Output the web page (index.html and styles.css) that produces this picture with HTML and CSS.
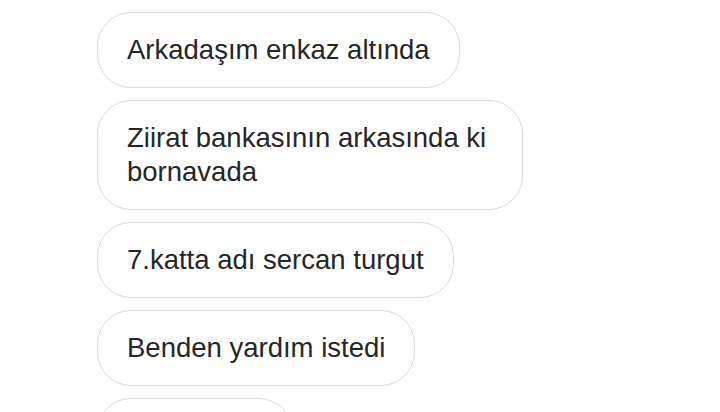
FILE: index.html
```html
<!DOCTYPE html>
<html lang="tr">
<head>
<meta charset="utf-8">
<title>Mesajlar</title>
<link rel="stylesheet" href="styles.css">
</head>
<body>
<main class="thread">
  <div class="bubble bubble-prev" aria-hidden="true"></div>
  <div class="bubble">Arkadaşım enkaz altında</div>
  <div class="bubble">Ziirat bankasının arkasında ki bornavada</div>
  <div class="bubble">7.katta adı sercan turgut</div>
  <div class="bubble">Benden yardım istedi</div>
  <div class="bubble bubble-next" aria-hidden="true"></div>
</main>
</body>
</html>
```
FILE: styles.css
```css
html, body {
  margin: 0;
  padding: 0;
  background: #ffffff;
  width: 720px;
  height: 412px;
  overflow: hidden;
}
.thread {
  display: flex;
  flex-direction: column;
  align-items: flex-start;
  gap: 12px;
  padding-left: 97px;
  margin-top: -76px;
  font-family: "Liberation Sans", Arial, sans-serif;
  font-size: 27.5px;
  line-height: 34px;
  color: #262626;
}
.bubble {
  max-width: 366px;
  padding: 20px 29px;
  border: 1.5px solid #dbdbdb;
  border-radius: 34px;
  background: #fff;
}
.bubble-prev {
  width: 50px;
  height: 34px;
}
.bubble-next {
  width: 136px;
  height: 34px;
}
```
